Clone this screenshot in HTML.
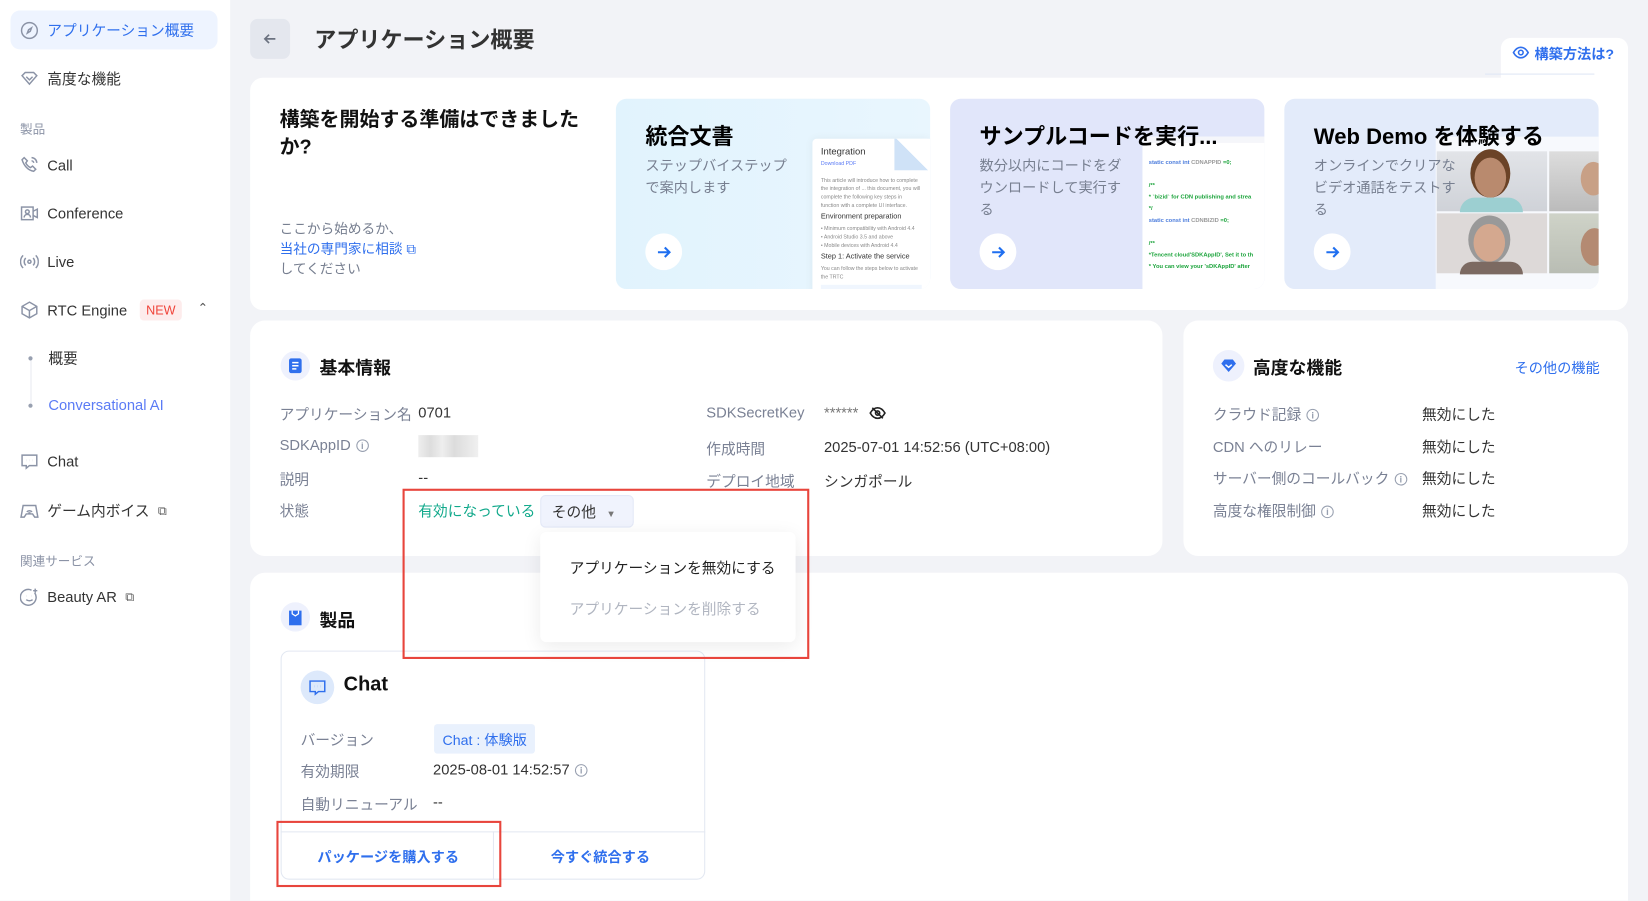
<!DOCTYPE html>
<html><head><meta charset="utf-8"><style>
*{box-sizing:border-box;margin:0;padding:0}
html,body{width:1648px;height:901px;overflow:hidden;background:#f2f3f7}
body{font-family:"Liberation Sans","Noto Sans CJK JP",sans-serif;color:#333}
#w{position:absolute;left:0;top:0;width:1568px;height:857px;overflow:hidden;transform:scale(1.05102);transform-origin:0 0;background:#f2f3f7}
.a{position:absolute}
.side{left:0;top:0;width:219px;height:857px;background:#fff}
.nav{position:absolute;left:19px;font-size:14px;color:#333;display:flex;align-items:center;gap:8px;white-space:nowrap}
.nav svg{width:18px;height:18px;stroke:#8b93a6;fill:none;stroke-width:1.4}
.sec{position:absolute;left:19px;font-size:12px;color:#8b93a6}
.card{position:absolute;background:#fff;border-radius:14px}
.lbl{position:absolute;font-size:14px;color:#7a8194;white-space:nowrap}
.val{position:absolute;font-size:14px;color:#333;white-space:nowrap}
.info{display:inline-block;width:12px;height:12px;border:1px solid #98a0b0;border-radius:50%;font-size:9px;line-height:10px;text-align:center;color:#98a0b0;vertical-align:middle;margin-left:5px;font-weight:bold}
.inner{position:absolute;top:94px;width:299px;height:181px;border-radius:10px;overflow:hidden}
.inner h3{position:absolute;left:28px;top:20px;font-size:21px;color:#000;white-space:nowrap;z-index:3}
.inner p{position:absolute;left:28px;top:53px;font-size:13.5px;line-height:21px;color:#777f90;z-index:2}
.arr{position:absolute;left:28px;top:128px;width:35px;height:35px;border-radius:50%;background:#fff;z-index:3;display:flex;align-items:center;justify-content:center}
.ico{position:absolute;width:28px;height:28px;border-radius:50%;background:#eef1fd;display:flex;align-items:center;justify-content:center}
.red{position:absolute;border:2px solid #e8453c}
</style></head><body><div id="w">

<div class="a side">
 <div class="a" style="left:10px;top:10px;width:197px;height:37px;background:#eef4ff;border-radius:9px"></div>
 <div class="nav" style="top:19px;color:#2f6fed"><svg viewBox="0 0 18 18"><circle cx="9" cy="9" r="7.5"/><path d="M11 6.5 8.2 8.3 7 11.5l2.8-1.8z"/></svg>アプリケーション概要</div>
 <div class="nav" style="top:65px"><svg viewBox="0 0 18 18"><path d="M2 6l3-3h8l3 3-7 8z"/><path d="M6 7l3 3 3-3"/></svg>高度な機能</div>
 <div class="sec" style="top:114px">製品</div>
 <div class="nav" style="top:148px"><svg viewBox="0 0 18 18"><path d="M4 2l3 3-1.5 2c1 2 2.5 3.5 4.5 4.5l2-1.5 3 3-2 2C8 14 4 10 2 4z"/><path d="M11 2a5 5 0 015 5M11 5a2 2 0 012 2"/></svg>Call</div>
 <div class="nav" style="top:194px"><svg viewBox="0 0 18 18"><rect x="1.5" y="3" width="11" height="12"/><circle cx="7" cy="7.5" r="1.8"/><path d="M4 13c0-2 1.5-3 3-3s3 1 3 3M12.5 7l4-2v8l-4-2"/></svg>Conference</div>
 <div class="nav" style="top:240px"><svg viewBox="0 0 18 18"><circle cx="9" cy="9" r="1.5"/><path d="M5.5 5.5a5 5 0 000 7M12.5 5.5a5 5 0 010 7M3 3a8.5 8.5 0 000 12M15 3a8.5 8.5 0 010 12"/></svg>Live</div>
 <div class="nav" style="top:285px"><svg viewBox="0 0 18 18"><path d="M9 1.5l7 4v7l-7 4-7-4v-7z"/><path d="M2 5.5l7 4 7-4M9 9.5v7"/></svg>RTC Engine<span style="background:#fdecec;color:#f0443a;font-size:12px;padding:3px 6px;border-radius:4px;margin-left:4px">NEW</span></div>
 <div class="a" style="left:188px;top:286px;color:#555;font-size:12px">&#8963;</div>
 <div class="a" style="left:29px;top:340px;width:1px;height:46px;background:#e8eaf0"></div>
 <div class="a" style="left:27px;top:339px;width:4px;height:4px;border-radius:50%;background:#98a0b0"></div>
 <div class="a" style="left:27px;top:384px;width:4px;height:4px;border-radius:50%;background:#98a0b0"></div>
 <div class="nav" style="left:46px;top:331px">概要</div>
 <div class="nav" style="left:46px;top:377px;color:#5b7bf5">Conversational AI</div>
 <div class="nav" style="top:430px"><svg viewBox="0 0 18 18"><path d="M2 3h14v10H9l-3 2.5V13H2z"/><path d="M6 8h.1M9 8h.1M12 8h.1" stroke-width="2"/></svg>Chat</div>
 <div class="nav" style="top:476px"><svg viewBox="0 0 18 18"><path d="M3 4h12l2 11h-3l-2-3H6l-2 3H1z"/><path d="M6.5 10a3.5 3.5 0 015 0M8 11.5a1.5 1.5 0 012 0"/></svg>ゲーム内ボイス <span style="font-size:12px;color:#555">&#10697;</span></div>
 <div class="sec" style="top:525px">関連サービス</div>
 <div class="nav" style="top:559px"><svg viewBox="0 0 18 18"><path d="M14 5a7.5 7.5 0 11-3-2.5"/><path d="M6.5 8h.1M11 8h.1" stroke-width="2"/><path d="M6 11.5c1.5 1.5 4.5 1.5 6 0M14.5 1v4M12.5 3h4"/></svg>Beauty AR <span style="font-size:12px;color:#555">&#10697;</span></div>
</div>

<div class="a" style="left:238px;top:18px;width:38px;height:38px;background:#e4e7ee;border-radius:7px;display:flex;align-items:center;justify-content:center"><svg width="16" height="16" viewBox="0 0 16 16" fill="none" stroke="#6b7280" stroke-width="1.6"><path d="M13 8H3M7 4L3 8l4 4"/></svg></div>
<div class="a" style="left:299px;top:22px;font-size:21px;font-weight:bold;color:#333">アプリケーション概要</div>

<div class="card" style="left:1428px;top:36px;width:121px;height:60px;border-radius:10px 10px 0 0"></div>
<div class="a" style="left:1439px;top:40px;font-size:13.5px;font-weight:bold;color:#2f6fed;white-space:nowrap;display:flex;align-items:center;gap:5px"><svg width="16" height="12" viewBox="0 0 16 12" fill="none" stroke="#2f6fed" stroke-width="1.5"><path d="M1 6c2-3.5 4.5-5 7-5s5 1.5 7 5c-2 3.5-4.5 5-7 5S3 9.5 1 6z"/><circle cx="8" cy="6" r="2.2"/></svg>構築方法は?</div>
<div class="a" style="left:1413px;top:70px;width:104px;height:1px;background:#dfe6f5"></div>

<div class="card" style="left:238px;top:74px;width:1311px;height:221px;border-radius:12px 0 12px 12px"></div>
<div class="a" style="left:266px;top:102px;font-size:19px;font-weight:bold;color:#111;line-height:26px;width:300px">構築を開始する準備はできましたか?</div>
<div class="a" style="left:266px;top:208px;font-size:13px;color:#777f90;line-height:19px">ここから始めるか、<br><span style="color:#2f6fed">当社の専門家に相談 &#10697;</span><br>してください</div>

<div class="inner" style="left:586px;background:linear-gradient(90deg,#e1f3fd,#e9f6fe)">
 <h3>統合文書</h3><p>ステップバイステップ<br>で案内します</p>
 <div class="a" style="left:187px;top:38px;width:112px;height:150px;background:#fff;border-radius:4px;box-shadow:0 0 8px rgba(0,0,0,.05);font-size:5px;color:#888;padding:8px;line-height:8px">
  <div style="font-size:9px;color:#333;margin-bottom:4px">Integration</div><div style="color:#5b7bf5">Download PDF</div><br>This article will introduce how to complete the integration of ... this document, you will complete the following key steps in function with a complete UI interface.<div style="font-size:7px;color:#333;margin:3px 0">Environment preparation</div>• Minimum compatibility with Android 4.4<br>• Android Studio 3.5 and above<br>• Mobile devices with Android 4.4<div style="font-size:7px;color:#333;margin:3px 0">Step 1: Activate the service</div>You can follow the steps below to activate the TRTC
  <div style="background:#f0f6fe;height:24px;margin-top:3px"></div>
 </div>
 <div class="a" style="left:265px;top:38px;width:34px;height:30px;background:linear-gradient(225deg,#fff 50%,#cfe2f7 50%)"></div>
 <div class="arr"><svg width="16" height="16" viewBox="0 0 16 16" fill="none" stroke="#1f6ff0" stroke-width="2"><path d="M2 8h11M8.5 3.5L13 8l-4.5 4.5"/></svg></div>
</div>
<div class="inner" style="left:904px;background:#e1e6fa">
 <h3>サンプルコードを実行...</h3><p>数分以内にコードをダ<br>ウンロードして実行す<br>る</p>
 <div class="a" style="left:183px;top:36px;width:120px;height:150px;background:#fff;font-size:5.5px;line-height:11px;padding:14px 6px;white-space:nowrap;font-weight:bold;border-top:6px solid #f5f6fa">
  <div style="color:#4a7bdc">static const int <span style="color:#999">CDNAPPID</span> <span style="color:#1aa33a">=0;</span></div><br><div style="color:#1aa33a">/**<br>* `bizid` for CDN publishing and strea<br>*/</div><div style="color:#4a7bdc">static const int <span style="color:#999">CDNBIZID</span> <span style="color:#1aa33a">=0;</span></div><br><div style="color:#1aa33a">/**<br>*Tencent cloud'SDKAppID', Set it to th<br>* You can view your 'sDKAppID' after</div>
 </div>
 <div class="arr"><svg width="16" height="16" viewBox="0 0 16 16" fill="none" stroke="#1f6ff0" stroke-width="2"><path d="M2 8h11M8.5 3.5L13 8l-4.5 4.5"/></svg></div>
</div>
<div class="inner" style="left:1222px;background:#e3ebfa">
 <h3 style="font-weight:bold">Web Demo を体験する</h3><p>オンラインでクリアな<br>ビデオ通話をテストす<br>る</p>
 <div class="a" style="left:144px;top:36px;width:160px;height:150px;background:#f7f9fd">
  <div class="a" style="left:1px;top:14px;width:105px;height:57px;background:linear-gradient(#e2e4e8,#cfd2d8)"><div class="a" style="left:36px;top:6px;width:30px;height:38px;border-radius:50%;background:#b98a6e;box-shadow:0 -4px 0 4px #6b4327"></div><div class="a" style="left:22px;top:44px;width:60px;height:14px;border-radius:30px 30px 0 0;background:#9ccfd1"></div></div>
  <div class="a" style="left:108px;top:14px;width:60px;height:57px;background:linear-gradient(#ddd,#bbb)"><div class="a" style="left:30px;top:10px;width:24px;height:32px;border-radius:50%;background:#c8a086"></div></div>
  <div class="a" style="left:1px;top:73px;width:105px;height:57px;background:#ddd9d8"><div class="a" style="left:35px;top:10px;width:30px;height:36px;border-radius:50%;background:#d4a88f;box-shadow:0 -3px 0 5px #999"></div><div class="a" style="left:22px;top:46px;width:60px;height:12px;border-radius:30px 30px 0 0;background:#7c6a62"></div></div>
  <div class="a" style="left:108px;top:73px;width:60px;height:57px;background:linear-gradient(#cfd3c8,#b9bdb4)"><div class="a" style="left:30px;top:14px;width:26px;height:36px;border-radius:50%;background:#b48a72"></div></div>
 </div>
 <div class="arr"><svg width="16" height="16" viewBox="0 0 16 16" fill="none" stroke="#1f6ff0" stroke-width="2"><path d="M2 8h11M8.5 3.5L13 8l-4.5 4.5"/></svg></div>
</div>

<!-- basic info -->
<div class="card" style="left:238px;top:305px;width:868px;height:224px"></div>
<div class="ico" style="left:267px;top:334px"><svg width="14" height="16" viewBox="0 0 14 16"><rect x="1" y="1" width="12" height="14" rx="2" fill="#2f6fed"/><path d="M4 5h6M4 8h6M4 11h4" stroke="#fff" stroke-width="1.4"/></svg></div>
<div class="a" style="left:304px;top:336px;font-size:17px;font-weight:bold;color:#111">基本情報</div>
<div class="lbl" style="left:266px;top:384px">アプリケーション名</div><div class="val" style="left:398px;top:384px">0701</div>
<div class="lbl" style="left:266px;top:415px">SDKAppID<span class="info">i</span></div>
<div class="a" style="left:398px;top:414px;width:57px;height:21px;background:linear-gradient(90deg,#eee,#ddd 20%,#eee 40%,#dcdcdc 60%,#f0f0f0)"></div>
<div class="lbl" style="left:266px;top:446px">説明</div><div class="val" style="left:398px;top:446px">--</div>
<div class="lbl" style="left:266px;top:476px">状態</div>
<div class="val" style="left:398px;top:476px;color:#11a98b">有効になっている</div>
<div class="a" style="left:514px;top:471px;width:89px;height:31px;background:#f0f3fd;border:1px solid #e3e8f7;border-radius:5px;font-size:14px;padding:5px 10px;white-space:nowrap">その他 <span style="font-size:9px;color:#777;margin-left:6px">&#9660;</span></div>
<div class="lbl" style="left:672px;top:384px">SDKSecretKey</div><div class="val" style="left:784px;top:384px;color:#777">****** <svg width="16" height="12" viewBox="0 0 16 12" fill="none" stroke="#222" stroke-width="1.5" style="vertical-align:middle;margin-left:6px"><path d="M1 6c2-3.5 4.5-5 7-5s5 1.5 7 5c-2 3.5-4.5 5-7 5S3 9.5 1 6z"/><circle cx="8" cy="6" r="2"/><path d="M3 1l10 10"/></svg></div>
<div class="lbl" style="left:672px;top:417px">作成時間</div><div class="val" style="left:784px;top:417px">2025-07-01 14:52:56 (UTC+08:00)</div>
<div class="lbl" style="left:672px;top:448px">デプロイ地域</div><div class="val" style="left:784px;top:448px">シンガポール</div>

<!-- advanced -->
<div class="card" style="left:1126px;top:305px;width:423px;height:224px"></div>
<div class="ico" style="left:1154px;top:333px;width:30px;height:30px"><svg width="16" height="14" viewBox="0 0 16 14"><path d="M1 5l3-4h8l3 4-7 8z" fill="#2f6fed"/><path d="M5 6l3 2.5L11 6" stroke="#fff" stroke-width="1.4" fill="none"/></svg></div>
<div class="a" style="left:1192px;top:336px;font-size:17px;font-weight:bold;color:#111">高度な機能</div>
<div class="a" style="left:1441px;top:339px;font-size:13.5px;color:#2f6fed">その他の機能</div>
<div class="lbl" style="left:1154px;top:384px">クラウド記録<span class="info">i</span></div><div class="val" style="left:1353px;top:384px">無効にした</div>
<div class="lbl" style="left:1154px;top:415px">CDN へのリレー</div><div class="val" style="left:1353px;top:415px">無効にした</div>
<div class="lbl" style="left:1154px;top:445px">サーバー側のコールバック<span class="info">i</span></div><div class="val" style="left:1353px;top:445px">無効にした</div>
<div class="lbl" style="left:1154px;top:476px">高度な権限制御<span class="info">i</span></div><div class="val" style="left:1353px;top:476px">無効にした</div>

<!-- products -->
<div class="card" style="left:238px;top:545px;width:1311px;height:312px;border-radius:14px 14px 0 0"></div>
<div class="ico" style="left:267px;top:573px"><svg width="12" height="15" viewBox="0 0 12 15"><path d="M0 1h12v14H0z" fill="#2f6fed"/><path d="M3 1v3l3 2 3-2V1" stroke="#fff" stroke-width="1.2" fill="none"/></svg></div>
<div class="a" style="left:304px;top:576px;font-size:17px;font-weight:bold;color:#111">製品</div>
<div class="a" style="left:267px;top:619px;width:404px;height:218px;border:1px solid #e3e8f2;border-radius:8px;background:#fff"></div>
<div class="a" style="left:267px;top:791px;width:404px;height:1px;background:#e3e8f2"></div>
<div class="a" style="left:469px;top:791px;width:1px;height:46px;background:#e3e8f2"></div>
<div class="ico" style="left:286px;top:638px;width:32px;height:32px;background:#dde9fb"><svg width="16" height="15" viewBox="0 0 16 15" fill="none" stroke="#2f6fed" stroke-width="1.4"><path d="M1 1h14v10H9l-3 2.5V11H1z"/><path d="M5 6h.1M8 6h.1M11 6h.1" stroke-width="2"/></svg></div>
<div class="a" style="left:327px;top:641px;font-size:19px;font-weight:bold;color:#111">Chat</div>
<div class="lbl" style="left:286px;top:694px">バージョン</div>
<div class="a" style="left:413px;top:689px;padding:4px 8px;background:#e9f1fd;border-radius:3px;color:#2f6fed;font-size:13.5px;white-space:nowrap">Chat : 体験版</div>
<div class="lbl" style="left:286px;top:724px">有効期限</div><div class="val" style="left:412px;top:724px">2025-08-01 14:52:57<span class="info">i</span></div>
<div class="lbl" style="left:286px;top:755px">自動リニューアル</div><div class="val" style="left:412px;top:755px">--</div>
<div class="a" style="left:302px;top:804px;font-size:13.5px;font-weight:bold;color:#2f6fed">パッケージを購入する</div>
<div class="a" style="left:524px;top:804px;font-size:13.5px;font-weight:bold;color:#2f6fed">今すぐ統合する</div>

<!-- dropdown -->
<div class="a" style="left:514px;top:506px;width:243px;height:105px;background:#fff;border-radius:6px;box-shadow:0 4px 18px rgba(0,0,0,.08)"></div>
<div class="a" style="left:542px;top:530px;font-size:14px;color:#222">アプリケーションを無効にする</div>
<div class="a" style="left:542px;top:569px;font-size:14px;color:#b0b5c0">アプリケーションを削除する</div>

<div class="red" style="left:383px;top:465px;width:387px;height:162px"></div>
<div class="red" style="left:263px;top:781px;width:214px;height:63px"></div>
</div></body></html>
